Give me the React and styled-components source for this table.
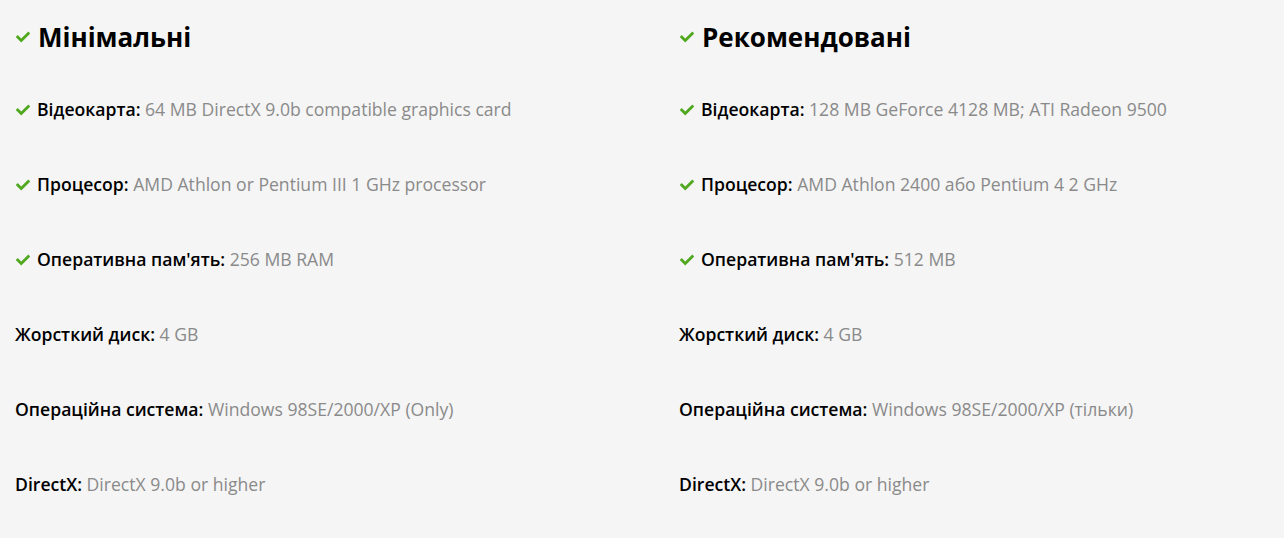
import React from 'react';
import styled, { createGlobalStyle } from 'styled-components';
import { FaCheck } from 'react-icons/fa';

const GlobalStyle = createGlobalStyle`
	body {
		margin: 0;
		background: #f5f5f5;
		font-family: 'Open Sans', 'Noto Sans', sans-serif;
	}
`;

const Wrapper = styled.div`
	display: grid;
	grid-template-columns: 664px 1fr;
	padding: 18px 15px 0;
	height: 538px;
	box-sizing: border-box;
`;

const Column = styled.div`
	display: flex;
	flex-direction: column;
`;

const Heading = styled.h2`
	display: flex;
	align-items: center;
	gap: 7px;
	margin: 0 0 16px;
	font-size: 26px;
	font-weight: 700;
	color: #000;
	line-height: 38px;
`;

const Check = styled(FaCheck)`
	color: #4fa81d;
	width: 16px;
	height: 14px;
	flex-shrink: 0;
`;

const Row = styled.div`
	display: flex;
	align-items: center;
	gap: 6px;
	height: 75px;
	font-size: 17.6px;
	line-height: 1;
`;

const Label = styled.span`
	font-weight: 600;
	color: #000;
`;

const Value = styled.span`
	color: #8a8a8a;
`;

const Spec = ({ check, label, value }) => (
	<Row>
		{check && <Check />}
		<span>
			<Label>{label}:</Label> <Value>{value}</Value>
		</span>
	</Row>
);

const minimal = [
	{ check: true, label: 'Відеокарта', value: '64 MB DirectX 9.0b compatible graphics card' },
	{ check: true, label: 'Процесор', value: 'AMD Athlon or Pentium III 1 GHz processor' },
	{ check: true, label: "Оперативна пам'ять", value: '256 MB RAM' },
	{ label: 'Жорсткий диск', value: '4 GB' },
	{ label: 'Операційна система', value: 'Windows 98SE/2000/XP (Only)' },
	{ label: 'DirectX', value: 'DirectX 9.0b or higher' },
];

const recommended = [
	{ check: true, label: 'Відеокарта', value: '128 MB GeForce 4128 MB; ATI Radeon 9500' },
	{ check: true, label: 'Процесор', value: 'AMD Athlon 2400 або Pentium 4 2 GHz' },
	{ check: true, label: "Оперативна пам'ять", value: '512 MB' },
	{ label: 'Жорсткий диск', value: '4 GB' },
	{ label: 'Операційна система', value: 'Windows 98SE/2000/XP (тільки)' },
	{ label: 'DirectX', value: 'DirectX 9.0b or higher' },
];

const App = () => {
	return (
		<>
			<GlobalStyle />
			<Wrapper>
				<Column>
					<Heading>
						<Check />
						Мінімальні
					</Heading>
					{minimal.map((s) => (
						<Spec key={s.label} {...s} />
					))}
				</Column>
				<Column>
					<Heading>
						<Check />
						Рекомендовані
					</Heading>
					{recommended.map((s) => (
						<Spec key={s.label} {...s} />
					))}
				</Column>
			</Wrapper>
		</>
	);
};

export default App;
